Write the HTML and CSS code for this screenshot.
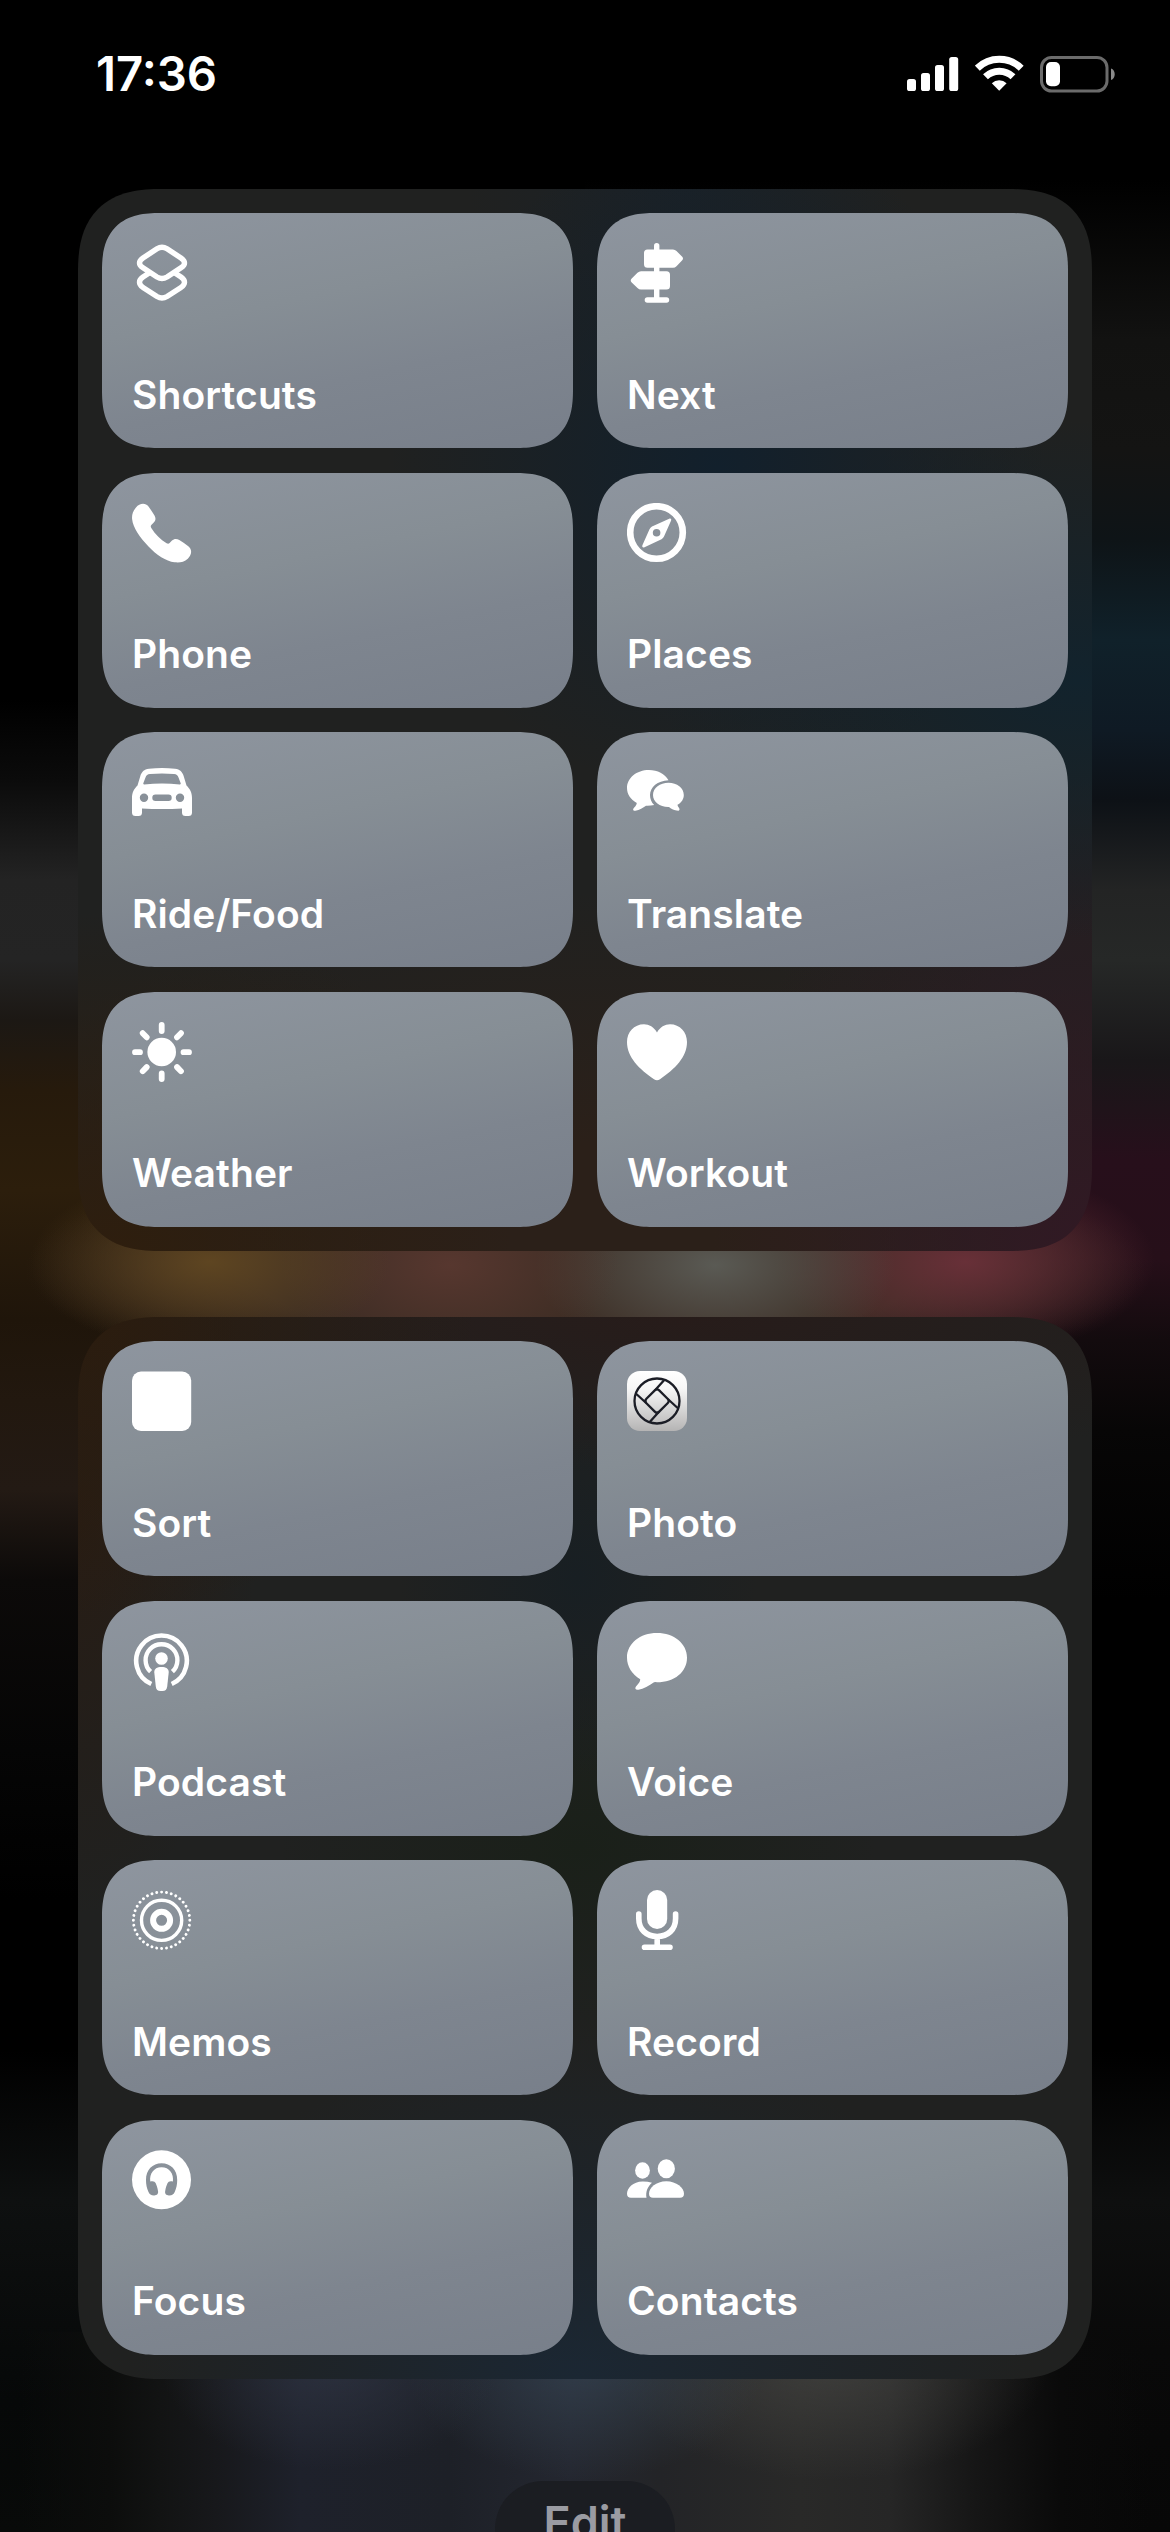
FILE: index.html
```html
<!DOCTYPE html>
<html lang="en">
<head>
<meta charset="utf-8">
<title>Shortcuts</title>
<link rel="stylesheet" href="styles.css">
</head>
<body>
<header class="status">
  <time class="clock">17:36</time>
  <div class="indicators">
    <svg class="signal" viewBox="0 0 53 36" fill="#fff"><rect x="0" y="23" width="9" height="12" rx="2.600"/><rect x="14" y="17" width="9" height="18" rx="2.600"/><rect x="28" y="9" width="9" height="26" rx="2.600"/><rect x="42.200" y="1" width="9" height="34" rx="2.600"/></svg>
    <svg class="wifi" viewBox="0 0 50 36"><g fill="none" stroke="#fff" stroke-width="7"><path d="M2.300 13.200A31.500 31.500 0 0 1 46.200 13.200"/><path d="M10.500 21.700A19.800 19.800 0 0 1 38 21.700"/></g><path d="M24.200 35.800L16.800 28.200A10.500 10.500 0 0 1 31.600 28.200Z" fill="#fff"/></svg>
    <svg class="battery" viewBox="0 0 76 38"><rect x="1.500" y="2.500" width="65.500" height="33.500" rx="10" fill="none" stroke="#6b6b6b" stroke-width="3"/><path d="M71 13.500C76 15 76 23.500 71 25Z" fill="#8a8a8a"/><rect x="6" y="7" width="14" height="24.300" rx="5" fill="#fff"/></svg>
  </div>
</header>

<main class="panels">
  <section class="panel panel-top">
    <a class="tile"><svg class="icon" viewBox="0 0 60 60"><g fill="none" stroke="#fff" stroke-width="5.400" stroke-linejoin="round"><path d="M25 5.800Q30 2.700 35 5.800L49 15Q56 20 49 24.800L35 34Q30 37 25 34L11 24.800Q4 20 11 15Z"/><path d="M17.500 29.800L11 34Q4 39 11 44.500L25 53.500Q30 56.500 35 53.500L49 44.500Q56 39 49 34L42.500 29.800"/></g></svg><span>Shortcuts</span></a>
    <a class="tile"><svg class="icon" viewBox="0 0 60 60" fill="#fff"><rect x="27" y="0" width="5.400" height="58" rx="2.700"/><rect x="17.700" y="54.300" width="24.500" height="5.500" rx="2.700"/><path d="M20.500 6.500H46Q48 6.500 49.500 8L55 13.500Q57 15.500 55 17.500L49.500 23.200Q48 24.700 46 24.700H20.500Q17 24.700 17 21.200V10Q17 6.500 20.500 6.500Z"/><path d="M39.500 28.200H14Q12 28.200 10.500 29.700L4.700 35.400Q2.700 37.400 4.700 39.400L10.500 45Q12 46.500 14 46.500H39.500Q43 46.500 43 43V31.700Q43 28.200 39.500 28.200Z"/></svg><span>Next</span></a>
    <a class="tile"><svg class="icon" viewBox="0 0 60 60" fill="#fff"><path d="M4 4.500C7.500 0 13.500-.5 16.500 3.500C18.500 6.200 20.700 9.500 22.500 12.500C24.200 15.300 23.600 18.200 21.300 20L19.300 22Q18.200 23.200 19.300 25C23 31 28.500 36.500 34.600 40.300Q36.300 41.300 37.600 40.100L40 37.500C42 35.500 44.800 35.400 47.300 37C50.500 39 53.500 41.200 56.300 43.200C60.300 46.200 60 52 55.800 55.700C52 59.300 47.500 59.800 42.500 59.300C34 58.200 24.500 52 16.500 43.500C8 34.500 1 25 .1 16C-.3 11.500 1 8 4 4.500Z"/></svg><span>Phone</span></a>
    <a class="tile"><svg class="icon" viewBox="0 0 60 60"><circle cx="29.500" cy="29.500" r="26.300" fill="none" stroke="#fff" stroke-width="6.600"/><path fill="#fff" fill-rule="evenodd" d="M42.200 15.700C43.700 15 44.700 16 44 17.700L37 33.500Q36.200 35.300 34.500 36.200L17.500 44.200C15.800 44.900 14.700 43.800 15.500 42L22.500 26.300Q23.300 24.500 25 23.600ZM29.600 25.900A3.800 3.800 0 1 0 29.600 33.500A3.800 3.800 0 1 0 29.600 25.900Z"/></svg><span>Places</span></a>
    <a class="tile"><svg class="icon" viewBox="0 0 60 60"><path fill="#fff" fill-rule="evenodd" d="M17 6.800Q30 5.400 43 6.800C48 7.300 50.500 10 51.800 14.500L54.500 23.500C58 27 60 30.500 60 36V50.500Q60 54 56.500 54H53.500Q50 54 50 50.500V46.600Q30 47.600 10 46.600V50.500Q10 54 6.500 54H3.500Q0 54 0 50.500V36C0 30.500 2 27 5.500 23.500L8.200 14.500C9.500 10 12 7.300 17 6.800ZM18 12Q30 11 42 12C44.500 12.200 45.700 13 46.500 15.500L48.700 21.300Q49 22.500 47.800 22.400Q30 20.800 12.200 22.400Q11 22.500 11.300 21.300L13.500 15.500C14.300 13 15.500 12.200 18 12ZM12 31.500A4.200 4.200 0 1 0 12 39.900A4.200 4.200 0 1 0 12 31.500ZM48 31.500A4.200 4.200 0 1 0 48 39.900A4.200 4.200 0 1 0 48 31.500ZM23.500 32.500A3.200 3.200 0 0 0 23.500 38.900H36.500A3.200 3.200 0 0 0 36.500 32.500Z"/></svg><span>Ride/Food</span></a>
    <a class="tile"><svg class="icon" viewBox="0 0 60 60" fill="#fff"><path d="M41.500 18.200C38 12 30.500 8 22 8C9.500 8 0 16 0 26C0 32 3.500 37.500 9.800 41C9.800 43.500 6.800 45.500 6.200 47C5.800 48.500 7 49 8.500 48.700C12.500 48 16 46 19 43.800Q23 44 27.200 43C24.500 40.500 23 36.800 23 33C23 25 30.500 18.700 41.500 18.200Z"/><path d="M41.500 20.800C50 20.800 56.800 26 56.800 33C56.800 37 54.500 40.800 50.500 42.800C50.500 44.500 52.300 45.500 52.500 47C52.700 48.600 51.500 49 49.500 48.600C46.500 48 44 46.500 42 44.900C33 45.200 26 40 26 33C26 26 33 20.800 41.500 20.800Z"/></svg><span>Translate</span></a>
    <a class="tile"><svg class="icon" viewBox="0 0 60 60"><circle cx="29.700" cy="30" r="14.300" fill="#fff"/><path stroke="#fff" stroke-width="5.800" stroke-linecap="round" d="M29.700 3v6M29.700 51.500v5.500M3 30.200h5M51.500 30.200h5.500M10.700 11.200l4 4.100M49 11.200l-4 4.100M10.700 49.200l4-4.100M49 49.200l-4-4.100"/></svg><span>Weather</span></a>
    <a class="tile"><svg class="icon" viewBox="0 0 60 60"><path fill="#fff" d="M30 10.500C27 5 22 2.200 17 2.200C7 2.200 0 10 0 20C0 35 12 47 27 57.300Q30 59.300 33 57.300C48 47 60 35 60 20C60 10 53 2.200 43 2.200C38 2.200 33 5 30 10.500Z"/></svg><span>Workout</span></a>
  </section>

  <section class="panel panel-bottom">
    <a class="tile"><svg class="icon" viewBox="0 0 60 60"><rect x="0" y=".5" width="59.200" height="59.500" rx="9" fill="#fff"/></svg><span>Sort</span></a>
    <a class="tile"><svg class="icon" viewBox="0 0 60 60"><defs><linearGradient id="lens" x2="0" y2="1"><stop offset="0" stop-color="#fff"/><stop offset=".3" stop-color="#f6f6f6"/><stop offset="1" stop-color="#b5b4b4"/></linearGradient></defs><rect width="60" height="60" rx="13" fill="url(#lens)"/><g fill="none" stroke="#1b1d26" stroke-width="2.300" stroke-linejoin="round"><circle cx="30" cy="30" r="22.500"/><path d="M27.800 19.400Q30 17.200 32.200 19.400L40.600 27.800Q42.800 30 40.600 32.200L32.200 40.600Q30 42.800 27.800 40.600L19.400 32.200Q17.200 30 19.400 27.800Z"/><path d="M28 19.200L37.500 8.800M40.800 28L51.200 37.500M32 40.800L22.500 51.200M19.200 32L8.800 22.500"/></g></svg><span>Photo</span></a>
    <a class="tile"><svg class="icon" viewBox="0 0 60 60"><g fill="none" stroke="#fff"><path stroke-width="4.600" d="M19.300 53A25.300 25.300 0 1 1 39.700 53"/><path stroke-width="4.400" d="M18.600 40.700A15.900 15.900 0 1 1 40.400 40.700"/></g><circle cx="29.500" cy="27.500" r="6.300" fill="#fff"/><path fill="#fff" d="M22.300 41.500C22 37.800 25 36 29.500 36S37 37.800 36.700 41.500L35.200 55.500Q34.700 60 30.500 60H28.500Q24.300 60 23.800 55.500Z"/></svg><span>Podcast</span></a>
    <a class="tile"><svg class="icon" viewBox="0 0 60 60"><path fill="#fff" d="M30 2C47 2 60 12.500 60 26.700C60 41 47.500 51.200 30 51.200Q28.500 51 27 51.200C22 54.800 16.500 57.800 11.500 58.700C8.500 59.200 7.500 57.500 9 55.500C11.300 52.800 13.500 50.500 13.200 48.200C5 43.200 0 35.500 0 26.700C0 12.500 13 2 30 2Z"/></svg><span>Voice</span></a>
    <a class="tile"><svg class="icon" viewBox="0 0 60 60" fill="none" stroke="#fff"><circle cx="29.600" cy="30.300" r="28.200" stroke-width="2.900" stroke-linecap="round" pathLength="360" stroke-dasharray=".01 9.990" transform="rotate(-90 29.600 30.300)"/><circle cx="29.600" cy="30.300" r="20.100" stroke-width="3.400"/><circle cx="29.600" cy="30.300" r="8.500" stroke-width="6"/></svg><span>Memos</span></a>
    <a class="tile"><svg class="icon" viewBox="0 0 60 60"><rect x="20" y="0" width="20.200" height="39" rx="10.100" fill="#fff"/><path fill="none" stroke="#fff" stroke-width="5.600" stroke-linecap="round" d="M11.800 24V28.500C11.800 39.500 19.500 46.500 30.200 46.500S48.600 39.500 48.600 28.500V24M30.200 47V57M17.500 57.200H43"/></svg><span>Record</span></a>
    <a class="tile"><svg class="icon" viewBox="0 0 60 60"><path fill="#fff" fill-rule="evenodd" d="M29.500 .3A29.500 29.500 0 1 0 29.500 59.300A29.500 29.500 0 1 0 29.500 .3ZM29.600 13.300C20.500 13.300 14 20 14 30C14 34.500 14.800 38 16.400 41.800C17.500 44.500 19 45.300 22 45.400C25 45.500 26.600 43.700 26 41C25.500 38 24.700 35.500 23.700 33.300C22.900 31.500 21 30.700 18.300 31.600C17.200 23.500 22 17.200 29.600 17.200S42 23.500 40.900 31.600C38.200 30.700 36.300 31.500 35.500 33.300C34.500 35.500 33.700 38 33.200 41C32.600 43.700 34.200 45.500 37.200 45.400C40.200 45.300 41.700 44.500 42.800 41.800C44.400 38 45.200 34.500 45.200 30C45.200 20 38.700 13.300 29.600 13.300Z"/></svg><span>Focus</span></a>
    <a class="tile"><svg class="icon" viewBox="0 0 60 60" fill="#fff"><ellipse cx="15.500" cy="20.500" rx="7.400" ry="8.200"/><ellipse cx="39.300" cy="18.800" rx="8.600" ry="9.500"/><path d="M25 32.700Q20.500 31.300 15.500 31.400C6 31.500 0 38 0 43.800Q0 47.700 4 47.700H19.500C18.500 42 20.500 36.500 25 32.700Z"/><path d="M39.300 31.300C29 31.300 22 38 22 43.800Q22 47.700 26 47.700H53Q57 47.700 57 43.800C57 38 49.500 31.300 39.300 31.300Z"/></svg><span>Contacts</span></a>
  </section>
</main>

<footer class="footer"><button class="edit">Edit</button></footer>
</body>
</html>
```

FILE: styles.css
```css
* {
  box-sizing: border-box;
}

body {
  margin: 0;
  width: 1170px;
  height: 2532px;
  overflow: hidden;
  font-family: Inter, "Liberation Sans", sans-serif;
  color: #fff;
  background-color: #000;
  background-image:
    radial-gradient(180px 90px at 210px 1262px, #5e4521, #5e452100),
    radial-gradient(170px 100px at 450px 1265px, #57372f, #57372f00),
    radial-gradient(180px 100px at 715px 1265px, #5a5a54, #5a5a5400),
    radial-gradient(190px 95px at 965px 1262px, #683038, #68303800),
    radial-gradient(560px 130px at 585px 1270px, #3b2c23 60%, #3b2c2300),
    radial-gradient(170px 110px at 330px 2360px, #323847b0, #32384700),
    radial-gradient(180px 120px at 585px 2360px, #374655b8, #37465500),
    radial-gradient(220px 120px at 830px 2360px, #484845b0, #48484500),
    linear-gradient(90deg, #0a0b0a00 20px, #0c0d0c 110px, #121313 160px, #17181b 215px, #1e212b 300px, #1d2027 450px, #242730 570px, #232427 660px, #292928 800px, #262626 890px, #161616 975px, #0a0a0a 1060px, #0a0a0a00 1150px),
    linear-gradient(#000 700px, #0b0b0b 780px, #232323 880px, #242424 960px, #1c1814 1020px, #261a0c 1090px, #2c1e0c 1190px, #1f150a 1320px, #22180f 1400px, #231a14 1490px, #0c0a09 1580px, #050505 1750px, #000 1900px, #000 2050px, #0e1010 2200px, #060808 2400px, #080a09),
    linear-gradient(#000 180px, #121211 340px, #141413 450px, #0e1417 540px, #10212a 640px, #0f1a24 730px, #0d1116 800px, #232424 890px, #262827 960px, #191719 1060px, #270f1b 1160px, #260f19 1260px, #130b0e 1340px, #070606 1430px, #000 1600px, #000 2050px, #0e0f0f 2200px, #090909 2350px, #070707);
  background-size: auto, auto, auto, auto, auto, auto, auto, auto, 1170px 200px, 585px 100%, 585px 100%;
  background-position: 0 0, 0 0, 0 0, 0 0, 0 0, 0 0, 0 0, 0 0, 0 2332px, 0 0, 585px 0;
  background-repeat: no-repeat;
}

.status {
  display: flex;
  justify-content: space-between;
  align-items: flex-start;
  height: 189px;
  padding: 55px 54px 0 96px;
}

.clock {
  margin-top: -1px;
  font-size: 47.300px;
  line-height: 40px;
  font-weight: 600;
}

.indicators {
  display: flex;
  align-items: flex-start;
}

.signal {
  width: 53px;
  height: 36px;
  margin: 1px 15px 0 0;
}

.wifi {
  width: 50px;
  height: 36px;
  margin-right: 15px;
}

.battery {
  width: 76px;
  height: 38px;
}

.panels {
  display: grid;
  gap: 66px;
  padding: 0 78px;
}

.panel {
  display: grid;
  grid-template-columns: 471px 471px;
  grid-auto-rows: 235px;
  gap: 24.500px 24px;
  height: 1062px;
  padding: 24px;
  border-radius: 69px;
  background-color: #202120;
}

.panel-top {
  background-image:
    radial-gradient(330px 330px at 640px 280px, #12202c, #12202c00),
    radial-gradient(420px 260px at 1000px 490px, #12232d, #12232d00),
    radial-gradient(220px 220px at 610px 0, #1a2127, #1a212700),
    radial-gradient(400px 340px at 40px 1062px, #2e1e0e, #2e1e0e00),
    radial-gradient(380px 480px at 1014px 1062px, #311924, #31192400),
    radial-gradient(700px 360px at 520px 1062px, #2b2019 30%, #2b201900);
  background-repeat: no-repeat;
}

.panel-bottom {
  background-image:
    radial-gradient(400px 300px at 0 0, #2b1c0e, #2b1c0e00),
    radial-gradient(700px 150px at 600px 0, #271c1a, #271c1a00),
    radial-gradient(180px 400px at 0 200px, #271c14, #271c1400),
    radial-gradient(180px 200px at 500px 260px, #181f23, #181f2300),
    radial-gradient(300px 200px at 500px 530px, #1a2019, #1a201900),
    radial-gradient(450px 340px at 500px 1062px, #1b2733, #1b273300);
}

.tile {
  display: flex;
  flex-direction: column;
  justify-content: space-between;
  padding: 30px 30px 29.500px;
  border-radius: 46px;
  background: linear-gradient(168deg, #8e959f 0%, #868e95 38%, #7e858f 65%, #787f8a 100%);
  font-size: 39px;
  line-height: 48px;
  font-weight: 590;
  letter-spacing: .1px;
}

@supports (corner-shape: squircle) {
  .tile {
    border-radius: 58px;
    corner-shape: superellipse(1.350);
  }

  .panel {
    border-radius: 84px;
    corner-shape: superellipse(1.350);
  }
}

.icon {
  width: 60px;
  height: 60px;
}

.footer {
  display: flex;
  justify-content: center;
  padding-top: 102px;
}

.edit {
  width: 180px;
  height: 102px;
  padding: 0 0 18px;
  border: 0;
  border-radius: 48px;
  background: #1b1d22;
  color: #9a9ba2;
  font: 600 45px/60px Inter, "Liberation Sans", sans-serif;
}
```
